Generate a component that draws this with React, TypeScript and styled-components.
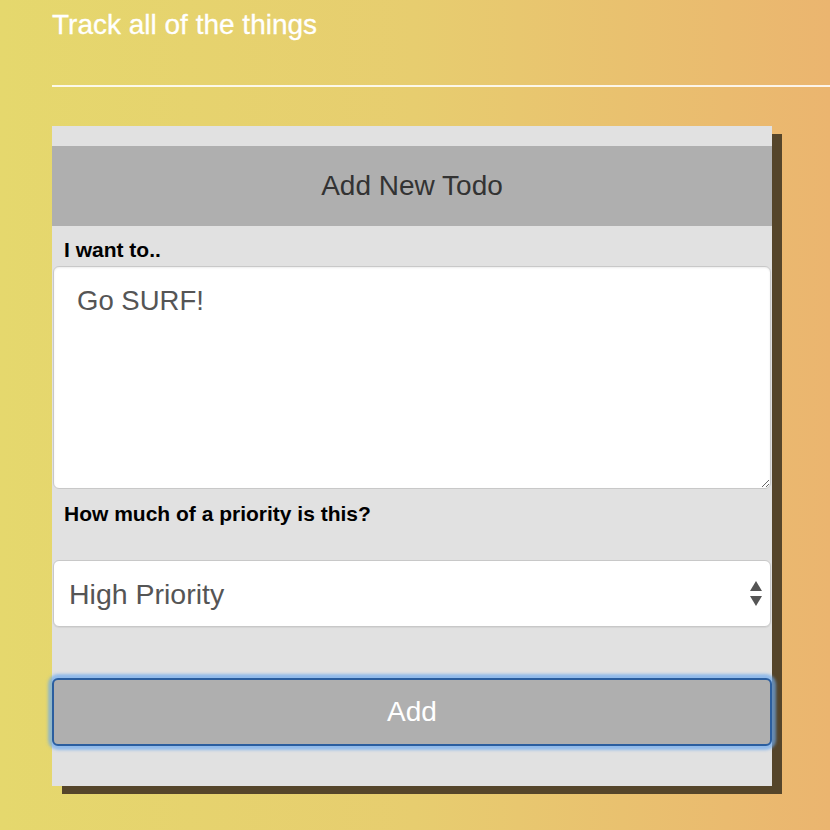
import React from "react";
import styled, { createGlobalStyle } from "styled-components";

const GlobalStyle = createGlobalStyle`
  html, body {
    margin: 0;
    padding: 0;
    height: 100%;
  }
  body {
    background: linear-gradient(to right, #e5d86d 0%, #e7cd6f 50%, #ebb56f 100%);
    font-family: "Liberation Sans", Arial, Helvetica, sans-serif;
    min-height: 830px;
    overflow: hidden;
  }
`;

const Page = styled.div`
  padding-left: 52px;
  padding-top: 9px;
`;

const Title = styled.h1`
  margin: 0;
  font-size: 28px;
  line-height: 32px;
  font-weight: normal;
  color: #ffffff;
  -webkit-text-stroke: 0.3px #ffffff;
`;

const Rule = styled.hr`
  margin: 44px 0 0 0;
  border: none;
  height: 2px;
  background: rgba(255, 255, 255, 0.85);
`;

const Card = styled.form`
  margin-top: 39px;
  width: 720px;
  box-sizing: border-box;
  background: #e1e1e1;
  padding: 20px 0 40px 0;
  box-shadow: 10px 8px 0 #55452a;
  display: flex;
  flex-direction: column;
`;

const Header = styled.div`
  height: 80px;
  background: #afafaf;
  color: #333333;
  font-size: 28px;
  display: flex;
  align-items: center;
  justify-content: center;
`;

const Label = styled.label<{ $top: number; $bottom: number }>`
  display: block;
  margin: ${(p) => p.$top}px 12px ${(p) => p.$bottom}px 12px;
  font-size: 21px;
  line-height: 23px;
  font-weight: bold;
  color: #000000;
`;

const TextArea = styled.textarea`
  box-sizing: border-box;
  margin: 0 1px;
  height: 223px;
  padding: 18px 23px;
  font-family: "Liberation Sans", Arial, Helvetica, sans-serif;
  font-size: 27.5px;
  line-height: 31px;
  color: #555555;
  background: #ffffff;
  border: 1px solid #c8c8c8;
  border-radius: 6px;
  box-shadow: inset 0 1px 2px rgba(0, 0, 0, 0.08);
  resize: both;
  outline: none;
`;

const SelectWrap = styled.div`
  position: relative;
  margin: 0 1px;
`;

const Select = styled.select`
  display: block;
  width: 100%;
  box-sizing: border-box;
  height: 67px;
  padding: 0 40px 0 15px;
  font-family: "Liberation Sans", Arial, Helvetica, sans-serif;
  font-size: 28.5px;
  color: #555555;
  background: #ffffff;
  border: 1px solid #c8c8c8;
  border-radius: 6px;
  box-shadow: 0 1px 1px rgba(0, 0, 0, 0.06);
  appearance: none;
  -webkit-appearance: none;
  outline: none;
`;

const Arrows = styled.svg`
  position: absolute;
  right: 8px;
  top: 50%;
  transform: translateY(-50%);
  pointer-events: none;
`;

const Button = styled.button`
  margin-top: 51px;
  height: 68px;
  box-sizing: border-box;
  background: #afafaf;
  color: #ffffff;
  font-family: "Liberation Sans", Arial, Helvetica, sans-serif;
  font-size: 28px;
  border: 2px solid #2b5e9f;
  border-radius: 6px;
  box-shadow: 0 0 3px 4px rgba(110, 170, 238, 0.7);
  cursor: pointer;
`;

export default function App() {
  return (
    <>
      <GlobalStyle />
      <Page>
        <Title>Track all of the things</Title>
        <Rule />
        <Card onSubmit={(e) => e.preventDefault()}>
          <Header>Add New Todo</Header>
          <Label $top={12} $bottom={5} htmlFor="todo">
            I want to..
          </Label>
          <TextArea id="todo" defaultValue="Go SURF!" />
          <Label $top={13} $bottom={35} htmlFor="priority">
            How much of a priority is this?
          </Label>
          <SelectWrap>
            <Select id="priority" defaultValue="high">
              <option value="high">High Priority</option>
              <option value="medium">Medium Priority</option>
              <option value="low">Low Priority</option>
            </Select>
            <Arrows width="14" height="28" viewBox="0 0 14 28">
              <polygon points="7,1 13,11 1,11" fill="#555" />
              <polygon points="1,16 13,16 7,26" fill="#555" />
            </Arrows>
          </SelectWrap>
          <Button type="submit">Add</Button>
        </Card>
      </Page>
    </>
  );
}
